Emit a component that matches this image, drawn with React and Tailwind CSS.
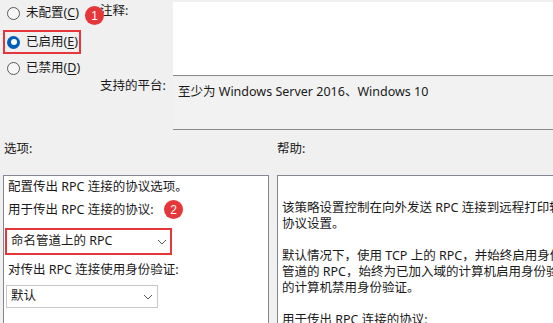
import React from 'react';

const font = "font-['Noto_Sans','Noto_Sans_CJK_SC',sans-serif]";

function Radio({ checked, label, hotkey }) {
  return (
    <div className="flex items-center h-[24px] pl-[7px] gap-[6px]">
      {checked ? (
        <span className="w-[13px] h-[13px] rounded-full bg-[#005fb8] flex items-center justify-center">
          <span className="w-[6px] h-[6px] rounded-full bg-white" />
        </span>
      ) : (
        <span className="w-[13px] h-[13px] rounded-full border border-[#5a5a5a] bg-[#f7f7f7]" />
      )}
      <span className="text-[12.5px] text-[#1a1a1a] leading-none">
        {label}(<span className="underline underline-offset-2">{hotkey}</span>)
      </span>
    </div>
  );
}

function Badge({ n }) {
  return (
    <span className="absolute w-[19px] h-[19px] rounded-full bg-[#e5363a] text-white text-[12px] leading-none flex items-center justify-center font-['Liberation_Sans',sans-serif]">
      {n}
    </span>
  );
}

function Select({ value, wide }) {
  return (
    <div
      className={`flex items-center justify-between bg-white h-[23px] pl-[4px] text-[12.5px] text-[#1a1a1a] ${
        wide ? 'w-[163px] pr-[3px]' : 'w-[152px] border border-[#c8c8c8] pr-[4px]'
      }`}
    >
      <span>{value}</span>
      <svg width="10" height="6" viewBox="0 0 10 6" fill="none">
        <path d="M1 1l4 4 4-4" stroke="#555" strokeWidth="1" />
      </svg>
    </div>
  );
}

export default function App() {
  const help = [
    '该策略设置控制在向外发送 RPC 连接到远程打印轮转程序时使用的',
    '协议设置。',
    '',
    '默认情况下，使用 TCP 上的 RPC，并始终启用身份验证。对于命名',
    '管道的 RPC，始终为已加入域的计算机启用身份验证，并为未加入域',
    '的计算机禁用身份验证。',
    '',
    '用于传出 RPC 连接的协议:',
  ];

  return (
    <div className={`relative w-[553px] h-[323px] overflow-hidden bg-[#f0f0f0] text-[#1a1a1a] ${font}`}>
      {/* top part */}
      <div className="flex">
        <div className="w-[100px] pt-[1px] relative">
          <Radio label="未配置" hotkey="C" />
          <div className="relative">
            <div className="absolute left-[3px] top-[5px] w-[78px] h-[24px] border-2 border-[#e5363a]" />
            <div className="pt-[5px] pb-[2px]">
              <Radio checked label="已启用" hotkey="E" />
            </div>
          </div>
          <Radio label="已禁用" hotkey="D" />
          <div className="absolute left-[85px] top-[6px]">
            <Badge n="1" />
          </div>
        </div>

        <div className="flex-1 flex flex-col">
          <div className="flex h-[76px]">
            <div className="w-[73px] pt-[3px] text-[12.5px] leading-[16px]">注释:</div>
            <div className="flex-1 mt-[2px] bg-white border-b border-[#8a8a8a]" />
          </div>
          <div className="flex h-[52px] mt-[2px]">
            <div className="w-[73px] text-[12.5px] leading-[16px]">支持的平台:</div>
            <div className="flex-1 bg-[#f2f2f2] border-b border-[#8a8a8a] pl-[5px] pt-[6px] text-[12.5px] leading-[16px] whitespace-nowrap">
              至少为 Windows Server 2016、Windows 10
            </div>
          </div>
        </div>
      </div>

      {/* labels */}
      <div className="flex mt-[11px] text-[12.5px] leading-[16px]">
        <div className="w-[277px] pl-[4px]">选项:</div>
        <div>帮助:</div>
      </div>

      {/* panels */}
      <div className="flex mt-[18px] gap-[8px] pl-[3px]">
        <div className="relative w-[266px] h-[160px] bg-white border border-[#828790] pl-[4px] text-[12.5px]">
          <div className="leading-[22px]">配置传出 RPC 连接的协议选项。</div>
          <div className="leading-[22px] mt-[1px]">用于传出 RPC 连接的协议:</div>
          <div className="relative -ml-[3px] mt-[7px] w-[167px] h-[27px] border-2 border-[#e5363a] flex items-center">
            <Select value="命名管道上的 RPC" wide />
          </div>
          <div className="leading-[22px] mt-[4px]">对传出 RPC 连接使用身份验证:</div>
          <div className="mt-[4px] -ml-[2px]">
            <Select value="默认" />
          </div>
          <div className="absolute left-[160px] top-[24px]">
            <Badge n="2" />
          </div>
        </div>

        <div className="flex-1 h-[160px] bg-white border border-[#828790] border-r-0 pl-[4px] pt-[24px] text-[12.5px] leading-[16px] whitespace-nowrap overflow-hidden">
          {help.map((l, i) => (
            <div key={i} className="h-[16px]">{l}</div>
          ))}
        </div>
      </div>
    </div>
  );
}
